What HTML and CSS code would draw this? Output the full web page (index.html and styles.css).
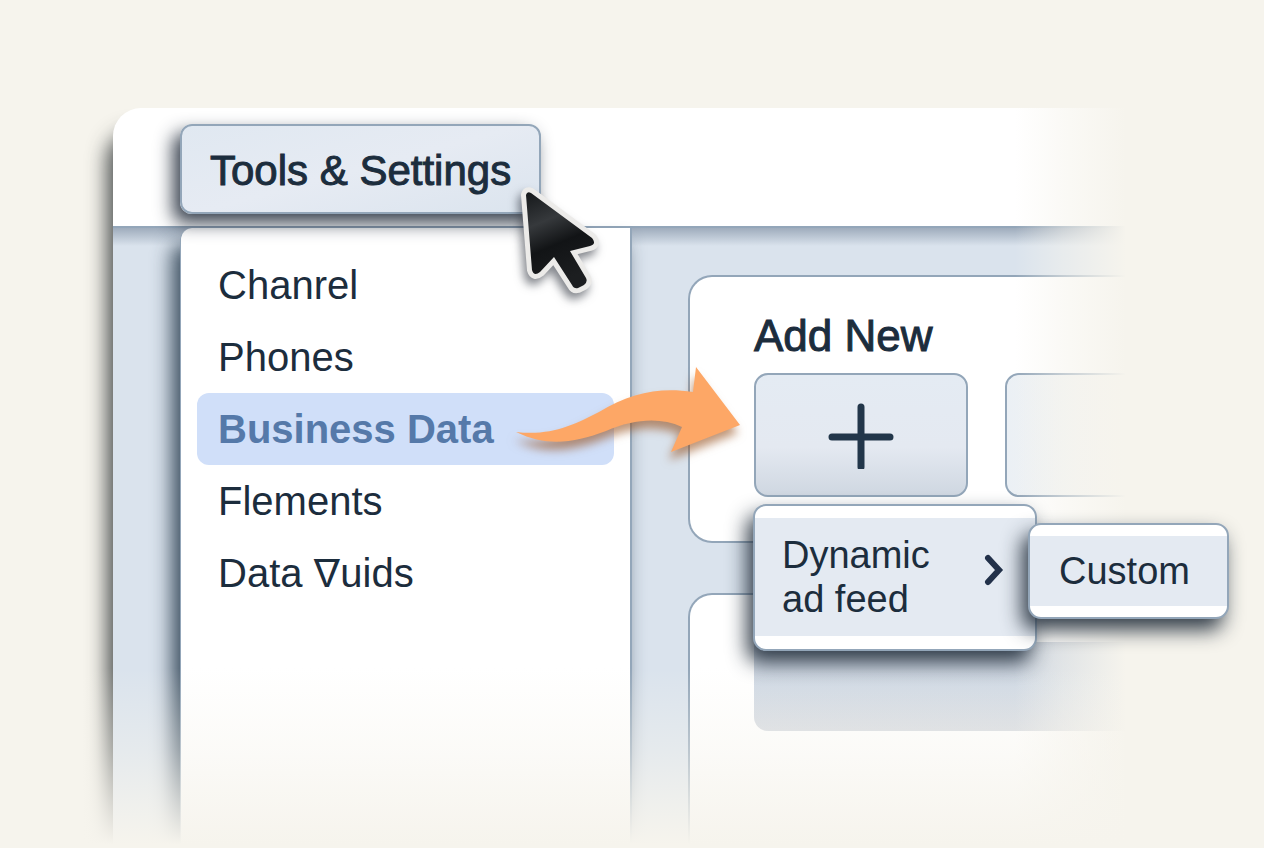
FILE: index.html
```html
<!DOCTYPE html>
<html lang="en">
<head>
<meta charset="utf-8">
<meta name="viewport" content="width=device-width, initial-scale=1">
<title>Tools &amp; Settings</title>
<link rel="stylesheet" href="styles.css">
</head>
<body>
<div class="page">
  <div class="window">
    <header class="topbar">
      <div class="trigger">
        <button class="tools-button" type="button">Tools &amp; Settings</button>
        <svg class="cursor" viewBox="0 0 90 120" aria-hidden="true">
          <defs>
            <linearGradient id="cursor-fill" x1="0" y1="0" x2="0.3" y2="1">
              <stop offset="0" stop-color="#15181a"/>
              <stop offset="0.35" stop-color="#36393c"/>
              <stop offset="0.62" stop-color="#121416"/>
              <stop offset="1" stop-color="#1c1e20"/>
            </linearGradient>
          </defs>
          <path d="M13 10 Q14 6 18 8 L79 53 Q84 59 77 61 L57 66 L73 93 Q75 97 71 100 L65 103 Q61 104 59 100 L41 72 L27 87 Q21 92 19 85 Z" fill="url(#cursor-fill)" stroke="#ecebe9" stroke-width="10" stroke-linejoin="round" paint-order="stroke"/>
        </svg>
      </div>
    </header>
    <div class="workspace">
      <nav class="menu" aria-label="Tools and settings">
        <ul class="menu-list">
          <li><a class="menu-item" href="#channel">Chanrel</a></li>
          <li><a class="menu-item" href="#phones">Phones</a></li>
          <li class="current">
            <a class="menu-item menu-item-active" href="#business-data" aria-current="page">Business Data</a>
            <svg class="flow-arrow" viewBox="0 0 240 110" aria-hidden="true">
              <path d="M7 70 C42 74 65 63 90 50 C122 31 150 25 184 30 L187 5 L231 63 L162 90 L173 65 C151 55 125 57 97 69 C65 81 38 85 7 70 Z" fill="#fda766"/>
            </svg>
          </li>
          <li><a class="menu-item" href="#elements">Flements</a></li>
          <li><a class="menu-item" href="#data">Data <span class="barred">V</span>uids</a></li>
        </ul>
      </nav>
      <main class="content">
        <section class="card">
          <h2 class="card-title">Add New</h2>
          <div class="tiles">
            <div class="tile-slot">
              <button class="tile" type="button" aria-label="Add new">
                <svg class="plus" viewBox="0 0 66 68" aria-hidden="true">
                  <path d="M33 6V66M4 36H62" stroke="#22364a" stroke-width="7" stroke-linecap="round"/>
                </svg>
              </button>
              <div class="popup popup-feed">
                <button class="popup-item feed-item" type="button">
                  <span>Dynamic<br>ad feed</span>
                  <svg class="chevron" viewBox="0 0 20 32" aria-hidden="true">
                    <path d="M4 4L15 16L4 28" fill="none" stroke="#22314a" stroke-width="6" stroke-linecap="round" stroke-linejoin="miter"/>
                  </svg>
                </button>
                <div class="popup popup-custom">
                  <button class="popup-item custom-item" type="button">Custom</button>
                </div>
              </div>
            </div>
            <div class="tile-next"></div>
          </div>
        </section>
        <section class="card card-last">
          <div class="placeholder"></div>
        </section>
      </main>
    </div>
  </div>
</div>
</body>
</html>
```
FILE: styles.css
```css
:root {
  --paper: #f6f4ed;
  --paper-clear: rgba(246, 244, 237, 0);
  --line: #93a6b9;
  --panel: #dae3ed;
  --soft: #e4eaf2;
  --ink: #1c2d3d;
}

* {
  box-sizing: border-box;
}

body {
  margin: 0;
  background: var(--paper);
  color: var(--ink);
  font-family: "Liberation Sans", Arial, sans-serif;
}

button {
  font: inherit;
  color: inherit;
  cursor: pointer;
}

.page {
  position: relative;
  display: flex;
  min-height: 100vh;
  padding: 108px 139px 0 113px;
  overflow: hidden;
}

/* lower edge dissolves into the paper */
.page::after {
  content: "";
  position: absolute;
  z-index: 2;
  inset: auto 0 0;
  height: 180px;
  background: linear-gradient(var(--paper-clear), rgba(246, 244, 237, 0.4) 45%, rgba(246, 244, 237, 0.75) 75%, var(--paper) 98%);
  pointer-events: none;
}

.window {
  position: relative;
  display: flex;
  flex: 1;
  flex-direction: column;
  min-width: 0;
  border-top-left-radius: 28px;
  background: #fff;
  box-shadow: -6px 24px 20px rgba(45, 50, 52, 0.85);
}

/* right edge dissolves into the paper */
.window::after {
  content: "";
  position: absolute;
  z-index: 1;
  inset: -8px -40px 0 auto;
  width: 150px;
  background: linear-gradient(90deg, var(--paper-clear), rgba(246, 244, 237, 0.5) 32%, var(--paper) 74%);
  pointer-events: none;
}

.topbar {
  padding: 16px 0 12px 67px;
}

.trigger {
  position: relative;
  width: max-content;
}

.tools-button {
  display: block;
  height: 90px;
  padding: 3px 28px 0;
  border: 2px solid var(--line);
  border-radius: 12px;
  background: linear-gradient(165deg, #e0e8f1, #e6ebf3 50%, #dbe4ee);
  box-shadow: -7px 9px 18px rgba(35, 45, 60, 0.9);
  font-size: 42px;
  -webkit-text-stroke: 1px currentColor;
}

.cursor {
  position: absolute;
  z-index: 4;
  right: -62px;
  bottom: -91px;
  width: 90px;
  height: 120px;
  filter: drop-shadow(-3px 6px 5px rgba(30, 35, 45, 0.55));
}

.workspace {
  display: flex;
  flex: 1;
  padding-left: 67px;
  border-top: 2px solid var(--line);
  background: linear-gradient(rgba(70, 90, 115, 0.4), rgba(70, 90, 115, 0) 18px), var(--panel);
}

.menu {
  flex: none;
  width: 452px;
  padding: 21px 16px;
  border: solid var(--line);
  border-width: 0 2px 0 1px;
  border-top-left-radius: 12px;
  background: #fff;
  box-shadow: -8px 16px 20px rgba(40, 60, 78, 0.9);
}

.menu-list {
  margin: 0;
  padding: 0;
  list-style: none;
}

.current {
  position: relative;
}

.menu-item {
  display: flex;
  align-items: center;
  height: 72px;
  padding-left: 21px;
  border-radius: 12px;
  color: inherit;
  font-size: 40px;
  text-decoration: none;
  white-space: pre;
}

.menu-item-active {
  background: #d0dff9;
  color: #5579a9;
  font-weight: 700;
}

.barred {
  background: linear-gradient(currentColor, currentColor) center 8px / 22px 3px no-repeat;
}

.flow-arrow {
  position: absolute;
  z-index: 3;
  right: -135px;
  bottom: -7px;
  width: 240px;
  height: 110px;
  filter: drop-shadow(-2px 8px 5px rgba(150, 80, 30, 0.6));
}

.content {
  display: flex;
  flex: 1;
  flex-direction: column;
  gap: 50px;
  min-width: 0;
  padding: 47px 0 0 56px;
}

.card {
  padding: 31px 0 44px 64px;
  border: 2px solid var(--line);
  border-right: 0;
  border-radius: 24px 0 0 24px;
  background: #fff;
}

.card-last {
  flex: 1;
  padding-top: 47px;
  border-bottom: 0;
  border-radius: 24px 0 0;
}

.card-title {
  margin: 0 0 9px;
  font-size: 44px;
  font-weight: 400;
  line-height: 56px;
  -webkit-text-stroke: 1px currentColor;
}

.tiles {
  display: flex;
  gap: 37px;
}

.tile-slot {
  position: relative;
  flex: none;
}

.tile {
  display: flex;
  align-items: center;
  justify-content: center;
  width: 214px;
  height: 124px;
  padding: 0;
  border: 2px solid var(--line);
  border-radius: 14px;
  background: linear-gradient(#e4ebf3, #e4e9f1 60%, #cfd7e1);
}

.plus {
  width: 66px;
  height: 68px;
}

.tile-next {
  flex: 1;
  border: 2px solid var(--line);
  border-right: 0;
  border-radius: 14px 0 0 14px;
  background: linear-gradient(90deg, #ebf0f5, #f6f5f0);
}

.placeholder {
  height: 89px;
  border-radius: 0 0 0 14px;
  background: linear-gradient(#c9d1dc, #d0d9e4 50%, #d6dae0);
}

.popup {
  position: absolute;
  border: 2px solid var(--line);
  border-radius: 13px;
  background: #fff;
  box-shadow: -6px 11px 20px rgba(30, 42, 55, 0.9);
}

.popup-feed {
  z-index: 5;
  top: calc(100% + 7px);
  left: -1px;
  width: 284px;
  padding: 12px 0 13px;
}

.popup-custom {
  top: 17px;
  left: calc(100% - 7px);
  width: 201px;
  padding: 11px 0;
}

.popup-item {
  display: flex;
  align-items: center;
  width: 100%;
  border: 0;
  background: var(--soft);
  font-size: 38px;
  line-height: 44px;
  text-align: left;
}

.feed-item {
  justify-content: space-between;
  height: 118px;
  padding: 0 31px 0 27px;
}

.chevron {
  width: 20px;
  height: 32px;
  margin-bottom: 14px;
}

.custom-item {
  height: 70px;
  padding: 0 0 0 29px;
}
```
